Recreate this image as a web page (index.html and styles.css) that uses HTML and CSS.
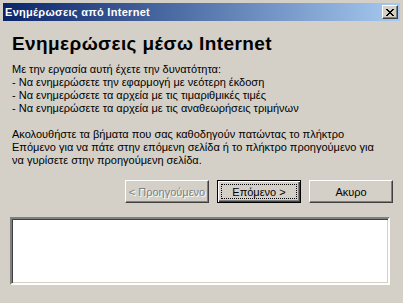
FILE: index.html
```html
<!DOCTYPE html>
<html lang="el">
<head>
	<meta charset="UTF-8">
	<title>Ενημέρωσεις από Internet</title>
	<link rel="stylesheet" href="styles.css">
</head>
<body>
	<div class="window">
		<div class="titlebar">
			<span class="title">Ενημέρωσεις από Internet</span>
			<button class="close-btn" type="button">
				<svg width="8" height="7" viewBox="0 0 8 7"><path d="M0 0h2v1H0z M6 0h2v1H6z M1 1h2v1H1z M5 1h2v1H5z M2 2h4v1H2z M3 3h2v1H3z M2 4h4v1H2z M1 5h2v1H1z M5 5h2v1H5z M0 6h2v1H0z M6 6h2v1H6z" fill="#000"/></svg>
			</button>
		</div>

		<div class="content">
			<h1>Ενημερώσεις μέσω Internet</h1>
			<p>Με την εργασία αυτή έχετε την δυνατότητα:<br>
			- Να ενημερώσετε την εφαρμογή με νεότερη έκδοση<br>
			- Να ενημερώσετε τα αρχεία με τις τιμαριθμικές τιμές<br>
			- Να ενημερώσετε τα αρχεία με τις αναθεωρήσεις τριμήνων</p>
			<p>Ακολουθήστε τα βήματα που σας καθοδηγούν πατώντας το πλήκτρο<br>
			Επόμενο για να πάτε στην επόμενη σελίδα ή το πλήκτρο προηγούμενο για<br>
			να γυρίσετε στην προηγούμενη σελίδα.</p>
		</div>

		<div class="buttons">
			<button class="btn" type="button" disabled>&lt; Προηγούμενο</button>
			<button class="btn default" type="button"><span class="focus">Επόμενο &gt;</span></button>
			<button class="btn" type="button">Ακυρο</button>
		</div>

		<div class="log-box"></div>
	</div>
</body>
</html>
```

FILE: styles.css
```css
body {
	margin: 0;
	background: #d4d0c8;
	font-family: "Liberation Sans", Arial, sans-serif;
	font-size: 11px;
	color: #000;
}

.window {
	padding: 3px 3px 0 3px;
	height: 300px;
}

.titlebar {
	height: 18px;
	display: flex;
	align-items: center;
	justify-content: space-between;
	padding: 0 2px 0 2px;
	background: linear-gradient(to right, #0a246a, #a6caf0);
}

.title {
	color: #fff;
	font-weight: bold;
	font-size: 11px;
	letter-spacing: 0.3px;
	line-height: 18px;
}

.close-btn {
	width: 16px;
	height: 14px;
	padding: 0;
	display: flex;
	align-items: center;
	justify-content: center;
	background: #d4d0c8;
	border: 1px solid;
	border-color: #fff #404040 #404040 #fff;
	box-shadow: inset -1px -1px #808080;
}

.close-btn svg {
	display: block;
}

.content {
	padding: 13px 0 0 9px;
}

h1 {
	margin: 0;
	font-size: 19px;
	letter-spacing: 0.4px;
	line-height: 20px;
	font-weight: bold;
}

p {
	margin: 9px 0 0 0;
	line-height: 13px;
}

p + p {
	margin-top: 13px;
}

.buttons {
	display: flex;
	justify-content: flex-end;
	gap: 8px;
	padding: 13px 7px 0 0;
}

.btn {
	width: 84px;
	height: 23px;
	padding: 0;
	font-family: "Liberation Sans", Arial, sans-serif;
	font-size: 11px;
	color: #000;
	background: #d4d0c8;
	border: 1px solid;
	border-color: #fff #404040 #404040 #fff;
	box-shadow: inset -1px -1px #808080;
}

.btn:disabled {
	color: #808080;
	text-shadow: 1px 1px #fff;
}

.btn.default {
	border-color: #000;
	box-shadow: inset 1px 1px #fff, inset -1px -1px #404040, inset -2px -2px #808080;
	padding: 3px;
}

.focus {
	display: flex;
	align-items: center;
	justify-content: center;
	height: 100%;
	border: 1px dotted #000;
	box-sizing: border-box;
}

.log-box {
	margin: 14px 10px 0 7px;
	height: 64px;
	background: #fff;
	border: 2px solid;
	border-color: #808080 #fff #fff #808080;
	box-shadow: inset 1px 1px #404040, inset -1px -1px #d4d0c8;
}
```
